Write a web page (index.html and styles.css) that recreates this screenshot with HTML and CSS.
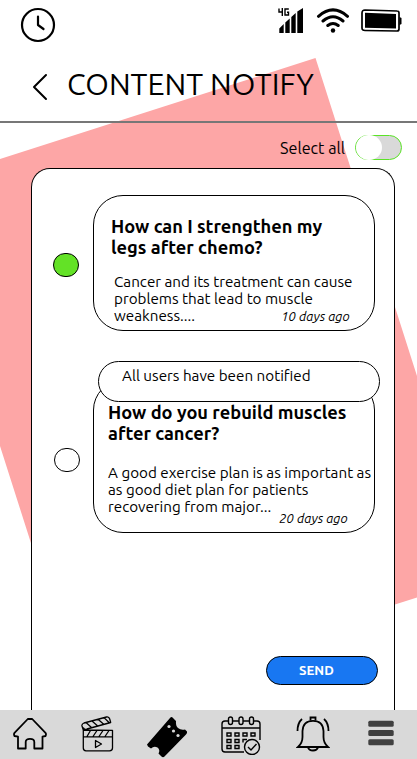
FILE: index.html
```html
<!DOCTYPE html>
<html lang="en">
<head>
<meta charset="utf-8">
<title>Content Notify</title>
<link rel="stylesheet" href="styles.css">
</head>
<body>
<div class="screen">
  <svg class="backdrop" viewBox="0 0 417 759"><path fill="#fda6a6" d="M315.500 58L417 376V597.500L60 711V634L0 446V159Z"/></svg>
  <header class="top">
    <div class="status">
      <svg class="clock" width="36" height="36" viewBox="0 0 36 36" fill="none" stroke="#000" stroke-width="2.200" stroke-linecap="round" stroke-linejoin="round"><circle cx="18" cy="18" r="16"/><path d="M18 9.500V18l5.500 4"/></svg>
      <svg class="signal" width="26" height="26" viewBox="0 0 26 26"><path d="M1.300 20.500L5.700 16V25H1.300zM7.300 14.500L11.700 10.500V25H7.300zM13.300 9L17.700 5V25H13.300zM19.300 3.500L25 0V25H19.300z"/><path d="M1 0.500V4H5M4.300 0V8M10.800 1H7V7H10.500V4.200H9" fill="none" stroke="#000" stroke-width="1.400"/></svg>
      <svg class="wifi" width="34" height="26" viewBox="0 0 34 26" fill="none" stroke="#000" stroke-width="3" stroke-linecap="round"><path d="M2.500 8.300Q17-4.500 31.500 8.300M7 13Q17 4.500 27 13M11.800 17.500Q17 13.500 22.200 17.500"/><circle cx="17" cy="22.500" r="2.200" fill="#000" stroke="none"/></svg>
      <svg class="battery" width="41" height="24" viewBox="0 0 41 24"><path d="M4 1L36 2Q38 2 38 4V20Q38 22 36 22L4 21.500Q1 21.500 1 19V4Q1 1 4 1Z" fill="none" stroke="#000" stroke-width="1.700"/><path d="M4 3.800L35 5V19.500L4 18.700ZM38.500 8L40.500 9V15L38.500 16Z"/></svg>
    </div>
    <div class="titlebar">
      <svg class="back" width="16" height="28" viewBox="0 0 16 28" fill="none" stroke="#000" stroke-width="2" stroke-linecap="round" stroke-linejoin="round"><path d="M14 2L2 14L14 26"/></svg>
      <h1>CONTENT NOTIFY</h1>
    </div>
  </header>
  <div class="select-all"><span class="select-label">Select all</span><span class="toggle"><i class="knob"></i></span></div>
  <main class="panel">
    <section class="item">
      <span class="radio on"></span>
      <article class="card first">
        <h2>How can I strengthen my<br>legs after chemo?</h2>
        <p>Cancer and its treatment can cause<br>problems that lead to muscle<br>weakness....</p>
        <time>10 days ago</time>
      </article>
    </section>
    <section class="item second-item">
      <span class="radio"></span>
      <article class="card second">
        <h2>How do you rebuild muscles<br>after cancer?</h2>
        <p>A good exercise plan is as important as<br>as good diet plan for patients<br>recovering from major...</p>
        <time>20 days ago</time>
      </article>
      <div class="toast">All users have been notified</div>
    </section>
    <button class="send">SEND</button>
  </main>
  <nav class="tabs">
    <svg class="home" width="34" height="32" viewBox="0 0 34 32" fill="none" stroke="#000" stroke-width="1.800" stroke-linejoin="round"><path d="M12.700 30.500H5V18.700L1.500 18Q.5 16 1.500 14.800L14.800 1H19.200L32.500 14.800Q33.500 16 32.500 18L29.500 18.700V30.500H21.300V24Q21.300 20.800 17 20.800Q12.700 20.800 12.700 24Z"/></svg>
    <svg class="film" width="33" height="36" viewBox="0 0 33 36" fill="none" stroke="#000" stroke-width="1.300" stroke-linejoin="round"><path d="M2.300 14L1 10Q.5 8 3 7L25.500 1Q28 .5 28.700 3L29.700 6.500L6 13Q3 14 2.300 11.500M5 6.500L11 12M11 5L17 10.200M17 3.300L23 8.500M23 1.600L28.500 7M2.300 14V32Q2.300 34.800 5 34.800H28.500Q31.500 34.800 31.500 32V14.300ZM2.300 20.800H31.500M6 20.500L9.500 14.500M12 20.500L16 14.500M18 20.500L22 14.500M24 20.500L28 14.500M14.500 24.500V31.500L20.500 28Z"/></svg>
    <svg class="ticket" width="42" height="42" viewBox="0 0 42 42"><path d="M0 28.500L23 2Q24.500 0 26 2L29 5Q28.500 10 31 12Q34 14.500 38 13.500L40 15.500Q40.500 17 39 18.500L17.500 40.500Q16 42 14.500 40.500L11.500 37.500Q13.500 34 10.500 31.500Q7 29.500 4 32.500L1 30.500Z"/><g fill="#d9d9d9"><circle cx="22" cy="10.500" r="1.600"/><circle cx="26.500" cy="15" r="1.600"/><circle cx="31" cy="19.500" r="1.600"/></g></svg>
    <svg class="calendar" width="41" height="39" viewBox="0 0 41 39" fill="none" stroke="#000" stroke-width="1.400"><path d="M7 5H4Q1 5 1 8V33Q1 36 4 36H23M12 5H18M22 5H28M33 5H36Q39 5 39 8V24M1 12H39"/><rect x="7.500" y="1" width="4" height="7.500" rx="2"/><rect x="18" y="1" width="4" height="7.500" rx="2"/><rect x="28.500" y="1" width="4" height="7.500" rx="2"/><path d="M6 17h4v3H6zM14 17h4v3h-4zM22 17h4v3h-4zM30 17h4v3h-4zM6 23.500h4v3H6zM14 23.500h4v3h-4zM22 26.500v-3h4M6 29.500h4v3H6zM14 29.500h4v3h-4z"/><circle cx="31" cy="31" r="7.500"/><path d="M27 31L30 34L35.500 28"/></svg>
    <svg class="bell" width="34" height="36" viewBox="0 0 34 36" fill="none" stroke="#000" stroke-width="1.800"><path d="M2 31Q6.500 27 6.500 21V15Q7 4.800 17 4.800Q27 4.800 27.500 15V21Q27.500 27 32 31Z"/><path d="M14.500 4.500V1.500H19.500V4.500M12 31.500Q13 34.500 17 34.500Q21 34.500 22 31.500M1.500 15Q1.500 7 6 3M32.500 15Q32.500 7 28 3"/></svg>
    <svg class="menu" width="26" height="26" viewBox="0 0 26 26" fill="#404040"><rect x=".3" y=".8" width="25.400" height="6" rx="1.500"/><rect x=".3" y="10" width="25.400" height="6" rx="1.500"/><rect x=".3" y="19.200" width="25.400" height="6" rx="1.500"/></svg>
  </nav>
</div>
</body>
</html>
```
FILE: styles.css
```css
* { box-sizing: border-box; }
body { margin: 0; font-family: "Ubuntu", "Noto Sans", sans-serif; color: #000; background: #fff; overflow: hidden; }
h1, h2, p { margin: 0; }
.screen { position: relative; isolation: isolate; width: 417px; height: 759px; display: flex; flex-direction: column; overflow: hidden; white-space: nowrap; }
.backdrop { position: absolute; inset: 0; width: 417px; height: 759px; z-index: -1; }
.top { height: 123px; border-bottom: 2px solid #777; flex: none; }
.status { display: flex; height: 60px; align-items: flex-start; padding: 7px 15px 0 20px; }
.signal { margin: 1px 12px 0 222px; }
.wifi { margin: 1px 11px 0 0; }
.battery { margin-top: 2px; }
.titlebar { display: flex; align-items: center; height: 50px; padding-left: 32px; }
.back { margin-top: 4px; }
h1 { margin: -2px 0 0 19px; font-size: 30.400px; font-weight: 400; line-height: 40px; }
.select-all { display: flex; align-items: center; justify-content: flex-end; height: 45px; padding: 4px 15px 0 0; flex: none; }
.select-label { font-size: 16.200px; margin-right: 10px; }
.toggle { width: 47px; height: 25px; border: 1px solid #5be327; border-radius: 13px; background: #d9d9d9; }
.knob { display: block; width: 26px; height: 25px; margin-top: -1px; border-radius: 13px; background: #fff; }
.panel { margin: 0 22px 0 31px; height: 542px; border: 1px solid #000; border-bottom: 0; border-radius: 19px 19px 0 0; background: #fff; padding: 26px 19px 0 21px; flex: none; }
.item { position: relative; display: flex; align-items: center; height: 136px; }
.radio { width: 26px; height: 24px; border: 1px solid #000; border-radius: 12px; background: #fff; margin: 4px 14px 0 0; flex: none; }
.radio.on { background: #63e226; }
.card { width: 282px; height: 136px; border: 1px solid #000; border-radius: 30px; background: #fff; position: relative; }
h2 { font-size: 18.250px; line-height: 21px; font-weight: 700; }
p { font-size: 15.220px; line-height: 17px; }
time { position: absolute; font-size: 13.200px; line-height: 16px; font-style: italic; }
.first { padding: 20px 0 0 17px; }
.first p { padding: 15px 0 0 3px; }
.first time { left: 187px; top: 112px; }
.second-item { height: 153px; margin-top: 49px; }
.second-item .radio { margin: 7px 13px 0 1px; }
.second { height: 153px; padding: 21px 0 0 14px; }
.second p { padding-top: 20px; }
.second time { left: 185px; top: 129px; }
.toast { position: absolute; left: 45px; top: -19px; width: 282px; height: 41px; border: 1px solid #000; border-radius: 21px; background: #fff; padding: 5px 0 0 23px; font-size: 15.220px; line-height: 17px; }
.send { display: block; width: 112px; height: 29px; margin: 123px 0 0 213px; padding: 0 0 1px 32px; border: 1px solid #000; border-radius: 15px; background: #1877f2; color: #fff; font: 700 13.200px "Ubuntu", "Noto Sans", sans-serif; text-align: left; }
.tabs { display: flex; height: 49px; background: #d9d9d9; flex: none; align-items: flex-start; padding-left: 13px; }
.home { margin-top: 8px; }
.film { margin: 6px 0 0 34px; }
.ticket { margin: 6px 0 0 33px; }
.calendar { margin: 6px 0 0 32px; }
.bell { margin: 6px 0 0 34px; }
.menu { margin: 10px 0 0 38px; }
```
